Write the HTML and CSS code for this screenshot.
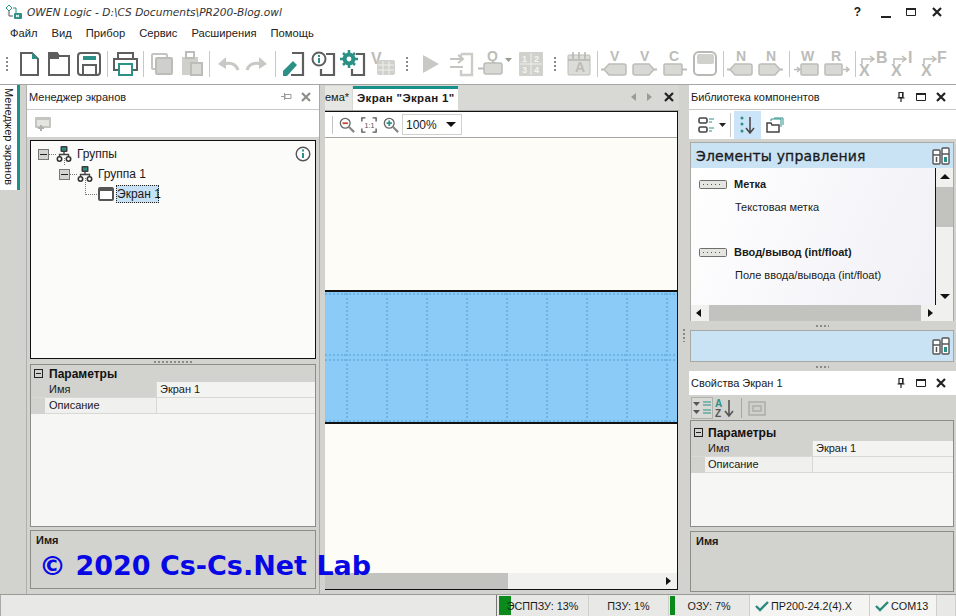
FILE: index.html
```html
<!DOCTYPE html>
<html lang="ru">
	<head>
		<meta charset="UTF-8" />
		<meta name="viewport" content="width=device-width, initial-scale=1.0" />
		<link rel="stylesheet" href="styles.css">
		<title>OWEN Logic</title>
	</head>
	<body>
		<svg class="sprite" width="0" height="0">
			<symbol id="i-new" viewBox="0 0 30 30"><path d="M7 4h11l6 6v16H7z" fill="#fff" stroke="#5e5e5e" stroke-width="2"/><path d="M18 4l6 6h-6z" fill="#2b9187"/></symbol>
			<symbol id="i-open" viewBox="0 0 30 30"><path d="M5 4h8l2 3h10v19H5z" fill="#fff" stroke="#5e5e5e" stroke-width="2"/><path d="M5 4h8l2 3v3H5z" fill="#5e5e5e"/></symbol>
			<symbol id="i-save" viewBox="0 0 30 30"><rect x="4" y="4" width="22" height="22" rx="3" fill="#fff" stroke="#5e5e5e" stroke-width="2"/><rect x="9" y="7" width="13" height="4" fill="#2b9187"/><path d="M9 26v-10h13v10" fill="none" stroke="#5e5e5e" stroke-width="2"/></symbol>
			<symbol id="i-print" viewBox="0 0 30 30"><path d="M8 9V4h15v5" fill="none" stroke="#5e5e5e" stroke-width="2"/><path d="M8 21H4V10h23v11h-4" fill="none" stroke="#5e5e5e" stroke-width="2"/><rect x="9" y="15" width="13" height="11" fill="#fff" stroke="#2b9187" stroke-width="2"/></symbol>
			<symbol id="i-copy" viewBox="0 0 30 30"><rect x="6" y="5" width="15" height="15" rx="1" fill="#fff" stroke="#c4c4c0" stroke-width="2"/><rect x="10" y="9" width="16" height="16" rx="1" fill="#cfcfcb" stroke="#bcbcb8" stroke-width="2"/></symbol>
			<symbol id="i-paste" viewBox="0 0 30 30"><path d="M6 8h16v10H15v8H6z" fill="#cfcfcb"/><rect x="10" y="3" width="8" height="6" fill="#fff" stroke="#bcbcb8" stroke-width="2"/><rect x="15" y="14" width="11" height="12" fill="#d8d8d4" stroke="#bcbcb8" stroke-width="2"/></symbol>
			<symbol id="i-undo" viewBox="0 0 30 30"><path d="M26 21c-2-6-8-8-15-6" fill="none" stroke="#c8c8c4" stroke-width="3"/><path d="M14 8L6 15l8 5z" fill="#c8c8c4"/></symbol>
			<symbol id="i-redo" viewBox="0 0 30 30"><path d="M5 21c2-6 8-8 15-6" fill="none" stroke="#c8c8c4" stroke-width="3"/><path d="M17 8l8 7-8 5z" fill="#c8c8c4"/></symbol>
			<symbol id="i-edit" viewBox="0 0 30 30"><path d="M14 4h11v22H13" fill="none" stroke="#5e5e5e" stroke-width="2.2"/><path d="M5 27v-5L15 12l4 4L9 27z" fill="#2b9187"/></symbol>
			<symbol id="i-info" viewBox="0 0 30 30"><path d="M18 5h8v21H13v-6" fill="none" stroke="#5e5e5e" stroke-width="2.2"/><circle cx="11" cy="10" r="6.500" fill="#fff" stroke="#5e5e5e" stroke-width="2"/><path d="M11 9v5M11 6v2" stroke="#2b9187" stroke-width="2"/></symbol>
			<symbol id="i-gear" viewBox="0 0 30 30"><path d="M18 5h8v21H14v-6" fill="none" stroke="#5e5e5e" stroke-width="2.2"/><circle cx="11" cy="10" r="4.500" fill="none" stroke="#2b9187" stroke-width="4"/><path d="M11 1v18M2 10h18M5 4l12 12M17 4L5 16" stroke="#2b9187" stroke-width="2.500"/><circle cx="11" cy="10" r="2.400" fill="#fff"/></symbol>
			<symbol id="i-play" viewBox="0 0 30 30"><path d="M7 6l16 9-16 9z" fill="#c8c8c4"/></symbol>
			<symbol id="i-in" viewBox="0 0 30 30"><path d="M15 5h11v21H15v-5M15 10V5" fill="none" stroke="#ccccc8" stroke-width="2.400"/><path d="M4 10h13M4 18h13M12 6l5 4-5 4" fill="none" stroke="#c4c4c0" stroke-width="2"/></symbol>
			<symbol id="i-blk-in" viewBox="0 0 30 30"><path d="M9 15h15a2 2 0 0 1 2 2v7a2 2 0 0 1-2 2H9l-5-5.500z" fill="#d8d8d4" stroke="#bcbcb8" stroke-width="1.500"/><path d="M1 20.500h3" stroke="#bcbcb8" stroke-width="2"/></symbol>
			<symbol id="i-blk-out" viewBox="0 0 30 30"><path d="M19 15H5a2 2 0 0 0-2 2v7a2 2 0 0 0 2 2h14l5-5.500z" fill="#d8d8d4" stroke="#bcbcb8" stroke-width="1.500"/><path d="M24 20.500h3" stroke="#bcbcb8" stroke-width="2"/></symbol>
			<symbol id="i-loop" viewBox="0 0 30 30"><rect x="7" y="5" width="17" height="10" rx="2" fill="#d0d0cc"/><path d="M9 3h12a5 5 0 0 1 5 5v14a4 4 0 0 1-4 4H8a4 4 0 0 1-4-4V8a5 5 0 0 1 5-5z" fill="none" stroke="#b8b8b4" stroke-width="2"/></symbol>
			<symbol id="i-close" viewBox="0 0 12 12"><path d="M2 2l8 8M10 2l-8 8" stroke="currentColor" stroke-width="2.200"/></symbol>
			<symbol id="i-max" viewBox="0 0 12 12"><path d="M1.500 2.500h9v7h-9z" fill="none" stroke="currentColor"/><path d="M1 2h10v2H1z" fill="currentColor"/></symbol>
			<symbol id="i-pin" viewBox="0 0 12 12"><path d="M4 1.500h4v5H4zM2.500 7h7M6 7v4" fill="none" stroke="currentColor" stroke-width="1.200"/><path d="M7 2h1v4H7z" fill="currentColor"/></symbol>
			<symbol id="i-pin-side" viewBox="0 0 12 12"><path d="M5 3.500h6v4H5zM4.500 2v7M1 5.500h3" fill="none" stroke="#9a9a96"/></symbol>
			<symbol id="i-org" viewBox="0 0 16 16"><rect x="4.500" y="0" width="7" height="6" rx="1" fill="#3d3d3d"/><rect x="6" y="1.500" width="4" height="3" fill="#2b9187"/><path d="M8 6v2.500M3.500 11V8.500h9V11" fill="none" stroke="#444" stroke-width="1.400"/><circle cx="3.500" cy="13" r="2.200" fill="#fff" stroke="#333" stroke-width="1.600"/><circle cx="12.500" cy="13" r="2.200" fill="#fff" stroke="#333" stroke-width="1.600"/></symbol>
			<symbol id="i-books" viewBox="0 0 18 18"><rect x="1" y="3" width="7" height="14" rx="1" fill="#fff" stroke="#555" stroke-width="1.400"/><rect x="10" y="1" width="7" height="16" rx="1" fill="#fff" stroke="#555" stroke-width="1.400"/><path d="M1 8h7M10 7h7" stroke="#555" stroke-width="1.400"/><path d="M4.500 10v5" stroke="#555" stroke-width="1.500"/><rect x="12" y="10" width="3" height="5" fill="#2b9187"/></symbol>
			<symbol id="i-block" viewBox="0 0 28 9"><rect x=".5" y=".5" width="27" height="8" rx="1" fill="#e4e4e0" stroke="#6e6e6a"/><path d="M4 4.500h20" stroke="#555" stroke-dasharray="1 3"/></symbol>
			<symbol id="i-check" viewBox="0 0 14 12"><path d="M1 6l4 4 8-8" fill="none" stroke="#2b8a7e" stroke-width="2.400"/></symbol>
		</svg>

		<div class="titlebar">
			<svg class="app-logo" width="18" height="16" viewBox="0 0 18 16"><path d="M3 1l3 3-3 3-3-3zM7 4h3v6" fill="none" stroke="#2b9187"/><path d="M3 7v5h4" fill="none" stroke="#555"/><rect x="8" y="9" width="8" height="6" rx="1" fill="#2b9187"/><path d="M10 11l3 2M13 11l-3 2" stroke="#fff"/></svg>
			<span class="app-title">OWEN Logic - D:\CS Documents\PR200-Blog.owl</span>
			<div class="win-buttons">
				<span class="win-help">?</span>
				<span class="win-min"></span>
				<svg class="win-ico"><use href="#i-max"/></svg>
				<svg class="win-ico"><use href="#i-close"/></svg>
			</div>
		</div>

		<nav class="menubar">
			<span>Файл</span><span>Вид</span><span>Прибор</span><span>Сервис</span><span>Расширения</span><span>Помощь</span>
		</nav>

		<div class="toolbar">
			<span class="grip grip-first"></span>
			<svg class="tool"><use href="#i-new"/></svg>
			<svg class="tool"><use href="#i-open"/></svg>
			<svg class="tool"><use href="#i-save"/></svg>
			<span class="sep"></span>
			<svg class="tool"><use href="#i-print"/></svg>
			<span class="sep"></span>
			<svg class="tool"><use href="#i-copy"/></svg>
			<svg class="tool"><use href="#i-paste"/></svg>
			<span class="sep"></span>
			<svg class="tool"><use href="#i-undo"/></svg>
			<svg class="tool"><use href="#i-redo"/></svg>
			<span class="sep"></span>
			<svg class="tool"><use href="#i-edit"/></svg>
			<svg class="tool"><use href="#i-info"/></svg>
			<svg class="tool"><use href="#i-gear"/></svg>
			<svg class="tool" viewBox="0 0 30 30"><text x="3" y="15" class="glyph glyph-big">V</text><rect x="9" y="11" width="18" height="15" rx="2" fill="#d0d0cc"/><path d="M10 16h16M10 21h16M15 12v14M21 12v14" stroke="#f0f0ec"/></svg>
			<span class="grip"></span>
			<svg class="tool"><use href="#i-play"/></svg>
			<svg class="tool"><use href="#i-in"/></svg>
			<svg class="tool tool-wide" viewBox="0 0 40 30"><text x="11" y="12" class="glyph">Q</text><rect x="8" y="14" width="18" height="11" rx="2" fill="#d8d8d4" stroke="#bcbcb8" stroke-width="1.500"/><path d="M2 19.500h6" stroke="#bcbcb8" stroke-width="2"/><path d="M29 9h7l-3.500 4z" fill="#9a9a96"/></svg>
			<svg class="tool" viewBox="0 0 30 30"><rect x="3" y="3" width="24" height="24" rx="1" fill="#d0d0cc"/><path d="M15 4v22M4 15h22" stroke="#f0f0ec"/><text x="6" y="13" class="glyph glyph-tiny">1</text><text x="18" y="13" class="glyph glyph-tiny">2</text><text x="6" y="24" class="glyph glyph-tiny">3</text><text x="18" y="24" class="glyph glyph-tiny">4</text></svg>
			<span class="grip"></span>
			<svg class="tool" viewBox="0 0 30 30"><rect x="4" y="6" width="22" height="20" rx="1" fill="#dcdcd8" stroke="#bcbcb8"/><path d="M9 3v7M15 3v7M21 3v7M4 11h22" stroke="#b4b4b0" stroke-width="1.500"/><text x="11" y="23" class="glyph">A</text></svg>
			<span class="sep"></span>
			<svg class="tool" viewBox="0 0 30 30"><use href="#i-blk-in" width="30" height="30"/><text x="10" y="12" class="glyph">V</text></svg>
			<svg class="tool" viewBox="0 0 30 30"><use href="#i-blk-out" width="30" height="30"/><text x="10" y="12" class="glyph">V</text></svg>
			<svg class="tool" viewBox="0 0 30 30"><rect x="4" y="15" width="18" height="11" rx="1" fill="#d8d8d4" stroke="#bcbcb8" stroke-width="1.500"/><path d="M22 20.500h5" stroke="#bcbcb8" stroke-width="2"/><text x="9" y="12" class="glyph">C</text></svg>
			<svg class="tool"><use href="#i-loop"/></svg>
			<span class="sep"></span>
			<svg class="tool" viewBox="0 0 30 30"><use href="#i-blk-in" width="30" height="30"/><text x="10" y="12" class="glyph">N</text></svg>
			<svg class="tool" viewBox="0 0 30 30"><use href="#i-blk-out" width="30" height="30"/><text x="10" y="12" class="glyph">N</text></svg>
			<span class="sep"></span>
			<svg class="tool" viewBox="0 0 30 30"><rect x="9" y="15" width="17" height="11" rx="1" fill="#d8d8d4" stroke="#bcbcb8" stroke-width="1.500"/><path d="M2 20.500h5M5 18l3 2.500-3 2.500" fill="none" stroke="#bcbcb8" stroke-width="1.500"/><text x="9" y="12" class="glyph">W</text></svg>
			<svg class="tool" viewBox="0 0 30 30"><rect x="3" y="15" width="17" height="11" rx="1" fill="#d8d8d4" stroke="#bcbcb8" stroke-width="1.500"/><path d="M21 20.500h6M24 18l3 2.500-3 2.500" fill="none" stroke="#bcbcb8" stroke-width="1.500"/><text x="9" y="12" class="glyph">R</text></svg>
			<span class="sep"></span>
			<svg class="tool" viewBox="0 0 30 30"><text x="1" y="27" class="glyph glyph-big">X</text><text x="18" y="14" class="glyph glyph-big">B</text><path d="M4 15v-5h11M12 7l4 3-4 3" fill="none" stroke="#bcbcb8" stroke-width="1.500"/></svg>
			<svg class="tool" viewBox="0 0 30 30"><text x="3" y="27" class="glyph glyph-big">X</text><text x="20" y="14" class="glyph glyph-big">I</text><path d="M6 15v-5h11M14 7l4 3-4 3" fill="none" stroke="#bcbcb8" stroke-width="1.500"/></svg>
			<svg class="tool" viewBox="0 0 30 30"><text x="3" y="27" class="glyph glyph-big">X</text><text x="19" y="14" class="glyph glyph-big">F</text><path d="M6 15v-5h11M14 7l4 3-4 3" fill="none" stroke="#bcbcb8" stroke-width="1.500"/></svg>
		</div>

		<div class="main">
			<div class="side-strip">
				<div class="side-tab">Менеджер экранов</div>
			</div>

			<section class="panel left-panel">
				<header class="panel-title">
					<span>Менеджер экранов</span>
					<svg class="title-ico"><use href="#i-pin-side"/></svg>
					<svg class="title-ico muted"><use href="#i-close"/></svg>
				</header>
				<div class="panel-tools">
					<svg class="add-ico" width="18" height="16" viewBox="0 0 18 16"><path d="M2 1h14a1 1 0 0 1 1 1v9a1 1 0 0 1-1 1H2a1 1 0 0 1-1-1V2a1 1 0 0 1 1-1z" fill="#c4c4c0"/><path d="M3 4h12v6H3z" fill="#e4e4e0"/><path d="M7 9v6M4 12h6" stroke="#b0b0ac" stroke-width="2"/></svg>
				</div>
				<div class="panel-body">
					<div class="tree">
						<svg class="tree-info" width="16" height="16" viewBox="0 0 16 16"><circle cx="8" cy="8" r="6.800" fill="#fff" stroke="#555" stroke-width="1.400"/><path d="M8 7v5M8 3.500v2" stroke="#2b9187" stroke-width="2"/></svg>
						<div class="tree-row">
							<span class="expander"></span><span class="dots-h"></span>
							<svg class="org-ico"><use href="#i-org"/></svg>
							<span class="tree-label">Группы</span>
						</div>
						<div class="tree-row indent-1">
							<span class="expander"></span><span class="dots-h"></span>
							<svg class="org-ico"><use href="#i-org"/></svg>
							<span class="tree-label">Группа 1</span>
						</div>
						<div class="tree-row indent-2">
							<span class="dots-corner"></span>
							<span class="screen-ico"></span>
							<span class="tree-selected">Экран 1</span>
						</div>
					</div>
					<div class="splitter"><span class="split-dots split-long"></span></div>
					<div class="props">
						<div class="prop-head"><span class="prop-minus"></span>Параметры</div>
						<div class="prop-row"><span class="prop-name">Имя</span><span class="prop-value">Экран 1</span></div>
						<div class="prop-row"><span class="prop-name prop-alt">Описание</span><span class="prop-value"></span></div>
					</div>
					<div class="descr"><b>Имя</b></div>
				</div>
			</section>

			<section class="center">
				<div class="tabs">
					<span class="tab">ема*</span>
					<span class="tab tab-active">Экран "Экран 1"</span>
					<div class="tab-nav">
						<i class="arrow-l"></i><i class="arrow-r"></i>
						<svg class="title-ico"><use href="#i-close"/></svg>
					</div>
				</div>
				<div class="doc">
					<div class="doc-tools">
						<span class="doc-sep"></span>
						<svg class="zoom-ico" viewBox="0 0 18 18"><circle cx="7" cy="7" r="5.500" fill="#fff" stroke="#666" stroke-width="1.500"/><path d="M4 7h6" stroke="#c8452c" stroke-width="2"/><path d="M11 11l6 6" stroke="#888" stroke-width="2.500"/></svg>
						<svg class="zoom-ico" viewBox="0 0 18 18"><path d="M1 5V1h4M13 1h4v4M17 13v4h-4M5 17H1v-4" fill="none" stroke="#555" stroke-width="1.500"/><text x="4" y="12" class="glyph-dark">1:1</text></svg>
						<svg class="zoom-ico" viewBox="0 0 18 18"><circle cx="7" cy="7" r="5.500" fill="#fff" stroke="#666" stroke-width="1.500"/><path d="M4 7h6M7 4v6" stroke="#2b9187" stroke-width="2"/><path d="M11 11l6 6" stroke="#888" stroke-width="2.500"/></svg>
						<div class="combo">100%<i class="arrow-d"></i></div>
					</div>
					<div class="canvas">
						<div class="screen">
							<div class="screen-row">
								<span></span><span></span><span></span><span></span><span></span><span></span><span></span><span></span><span></span><span></span>
							</div>
							<div class="screen-row">
								<span></span><span></span><span></span><span></span><span></span><span></span><span></span><span></span><span></span><span></span>
							</div>
						</div>
					</div>
					<div class="hscroll">
						<span class="hscroll-thumb"></span>
						<i class="arrow-r arrow-dark"></i>
					</div>
				</div>
			</section>

			<div class="v-splitter"><span class="split-dots-v"></span></div>

			<section class="panel right-panel">
				<header class="panel-title">
					<span>Библиотека компонентов</span>
					<svg class="title-ico"><use href="#i-pin"/></svg>
					<svg class="title-ico"><use href="#i-max"/></svg>
					<svg class="title-ico"><use href="#i-close"/></svg>
				</header>
				<div class="lib-tools">
					<svg class="lib-ico" width="30" height="18" viewBox="0 0 30 18"><rect x="1" y="2" width="8" height="5" rx="1.500" fill="none" stroke="#444" stroke-width="1.600"/><rect x="1" y="11" width="8" height="5" rx="1.500" fill="none" stroke="#444" stroke-width="1.600"/><path d="M11 3h5M11 6h3M11 12h5M11 15h3" stroke="#2b9187"/><path d="M21 7h7l-3.500 4z" fill="#222"/></svg>
					<span class="lib-sep"></span>
					<span class="lib-active"><svg width="18" height="18" viewBox="0 0 18 18"><circle cx="3" cy="2" r="1.500" fill="#2b9187"/><circle cx="3" cy="8" r="1.500" fill="#2b9187"/><circle cx="3" cy="15" r="1.500" fill="#2b9187"/><path d="M11 1v15M7 12l4 5 4-5" fill="none" stroke="#444" stroke-width="1.500"/></svg></span>
					<svg class="lib-ico" width="18" height="16" viewBox="0 0 18 16"><path d="M1 6h4l1 2h7v7H1z" fill="#fff" stroke="#444" stroke-width="1.500"/><path d="M5 4V2h10v8M8 1h9v7" fill="none" stroke="#2b9187"/></svg>
				</div>
				<div class="panel-body right-body">
					<div class="lib">
						<div class="lib-head"><span>Элементы управления</span><svg class="books"><use href="#i-books"/></svg></div>
						<div class="lib-view">
							<div class="lib-list">
								<div class="lib-item">
									<div class="lib-name"><svg class="block-ico"><use href="#i-block"/></svg><b>Метка</b></div>
									<div class="lib-desc">Текстовая метка</div>
								</div>
								<div class="lib-item">
									<div class="lib-name"><svg class="block-ico"><use href="#i-block"/></svg><b>Ввод/вывод (int/float)</b></div>
									<div class="lib-desc">Поле ввода/вывода (int/float)</div>
								</div>
							</div>
							<div class="vscroll">
								<i class="arrow-u"></i>
								<span class="vscroll-thumb"></span>
								<i class="arrow-d"></i>
							</div>
						</div>
						<div class="lib-hscroll">
							<i class="arrow-l arrow-dark"></i>
							<span class="lib-hthumb"></span>
							<i class="arrow-r arrow-dark"></i>
						</div>
					</div>
					<div class="splitter split-lib"><span class="split-dots"></span></div>
					<div class="lib-second"><svg class="books"><use href="#i-books"/></svg></div>
					<div class="splitter split-lib"><span class="split-dots"></span></div>
					<header class="panel-title prop-title">
						<span>Свойства Экран 1</span>
						<svg class="title-ico"><use href="#i-pin"/></svg>
						<svg class="title-ico"><use href="#i-max"/></svg>
						<svg class="title-ico"><use href="#i-close"/></svg>
					</header>
					<div class="prop-tools">
						<span class="prop-tool-on"><svg width="20" height="18" viewBox="0 0 20 18"><path d="M1 3h7l-3.500 4zM1 11h7l-3.500 4z" fill="#555"/><path d="M11 3h8M11 6h8M11 11h8M11 14h8" stroke="#2b9187"/></svg></span>
						<svg class="az-ico" width="20" height="20" viewBox="0 0 20 20"><text x="0" y="9" class="az-a">A</text><text x="0" y="19" class="az-z">Z</text><path d="M14 2v16M10 13l4 5 4-5" fill="none" stroke="#555" stroke-width="1.600"/></svg>
						<span class="prop-sep"></span>
						<svg class="prop-page" width="18" height="16" viewBox="0 0 18 16"><path d="M1 2h16v13H1z" fill="#cfcfcb" stroke="#adadaa" stroke-width="1.500"/><rect x="5" y="6" width="8" height="5" fill="none" stroke="#adadaa" stroke-width="1.500"/></svg>
					</div>
					<div class="props props-right">
						<div class="prop-head"><span class="prop-minus"></span>Параметры</div>
						<div class="prop-row"><span class="prop-name">Имя</span><span class="prop-value">Экран 1</span></div>
						<div class="prop-row"><span class="prop-name prop-alt">Описание</span><span class="prop-value"></span></div>
					</div>
					<div class="descr descr-right"><b>Имя</b></div>
				</div>
			</section>
		</div>

		<footer class="statusbar">
			<div class="st-cell st-empty"></div>
			<div class="st-cell st-eeprom"><i class="st-bar"></i><span class="st-text">ЭСППЗУ: 13%</span></div>
			<div class="st-cell st-rom">ПЗУ: 1%</div>
			<div class="st-cell st-ram"><i class="st-bar"></i>ОЗУ: 7%</div>
			<div class="st-cell st-device"><svg class="st-check"><use href="#i-check"/></svg>ПР200-24.2(4).X</div>
			<div class="st-cell st-com"><svg class="st-check"><use href="#i-check"/></svg>COM13</div>
			<div class="st-cell st-grip"></div>
		</footer>

		<div class="watermark">© 2020 Cs-Cs.Net Lab</div>
	</body>
</html>
```

FILE: styles.css
```css
* {
	box-sizing: border-box;
}

body {
	margin: 0;
	width: 956px;
	height: 616px;
	overflow: hidden;
	position: relative;
	background-color: #fff;
	color: #1a1a1a;
	font-family: "Liberation Sans", sans-serif;
	font-size: 12px;
}

.sprite {
	position: absolute;
}

.glyph {
	font: bold 14px "Liberation Sans", sans-serif;
	fill: #bcbcb8;
}

.glyph-big {
	font-size: 16px;
}

.glyph-tiny {
	font-size: 9px;
	fill: #f4f4f0;
}

.glyph-dark {
	font: 8px "Liberation Sans", sans-serif;
	fill: #555;
}

/* title + menu */
.titlebar {
	height: 24px;
	display: flex;
	align-items: center;
	padding-left: 6px;
}

.app-logo {
	margin-right: 3px;
}

.app-title {
	font-family: "DejaVu Sans", sans-serif;
	font-style: italic;
	font-size: 10.6px;
	color: #333;
}

.win-buttons {
	margin-left: auto;
	display: flex;
	align-items: center;
	padding-right: 13px;
}

.win-help {
	font: bold 12px "Liberation Sans", sans-serif;
	margin-right: 20px;
}

.win-min {
	width: 10px;
	height: 2px;
	background-color: #222;
	margin-top: 9px;
	margin-right: 14px;
}

.win-ico {
	width: 12px;
	height: 12px;
	color: #222;
}

.win-ico + .win-ico {
	margin-left: 14px;
}

.menubar {
	height: 18px;
	display: flex;
	align-items: center;
	padding-left: 10px;
	gap: 14px;
	color: #222;
	font-size: 11.2px;
}

.toolbar {
	margin-top: 2px;
	height: 40px;
	display: flex;
	align-items: center;
}

.tool {
	width: 30px;
	height: 30px;
	flex: none;
}

.tool-wide {
	width: 40px;
}

.sep {
	width: 6px;
	height: 26px;
	flex: none;
	background: linear-gradient(#c8c8c4, #c8c8c4) center / 1px 100% no-repeat;
}

.grip {
	width: 18px;
	height: 16px;
	flex: none;
	background: radial-gradient(circle, #8a8a86 1px, transparent 1px) center top / 2px 4px repeat-y;
}

.grip-first {
	width: 14px;
}

/* main area */
.main {
	height: 510px;
	display: flex;
	background-color: #d2d2ce;
	border-top: 1px solid #a6a6a2;
}

.side-strip {
	width: 26px;
	flex: none;
}

.side-tab {
	width: 20px;
	height: 105px;
	background-color: #fff;
	border-right: 3px solid #1c8f8a;
	writing-mode: vertical-rl;
	padding-top: 3px;
	padding-right: 1px;
	line-height: 15px;
	white-space: nowrap;
	font-size: 11px;
}

.panel-title {
	height: 25px;
	background-color: #fff;
	display: flex;
	align-items: center;
	gap: 8px;
	padding: 0 9px 0 2px;
	border-bottom: 1px solid #c8c8c4;
	font-size: 11px;
}

.panel-title span {
	margin-right: auto;
}

.title-ico {
	width: 12px;
	height: 12px;
	color: #222;
	flex: none;
}

.title-ico.muted {
	color: #8e8e8a;
}

.left-panel {
	width: 294px;
	flex: none;
	display: flex;
	flex-direction: column;
	border-right: 1px solid #a8a8a4;
	border-left: 1px solid #b0b0ac;
}

.left-panel .panel-title {
	padding-right: 7px;
}

.panel-tools {
	height: 27px;
	background-color: #fff;
	display: flex;
	align-items: center;
	padding-left: 7px;
}

.panel-body {
	padding: 3px 3px 0;
}

.tree {
	height: 219px;
	border: 1px solid #111;
	background-color: #fbfbfa;
	padding-top: 3px;
	position: relative;
}

.tree-info {
	position: absolute;
	right: 4px;
	top: 5px;
}

.tree-row {
	height: 20px;
	display: flex;
	align-items: center;
	padding-left: 7px;
	position: relative;
}

.indent-1 {
	padding-left: 28px;
}

.indent-2 {
	padding-left: 46px;
}

.expander {
	width: 11px;
	height: 11px;
	border: 1px solid #777;
	background: linear-gradient(#222, #222) center / 7px 1px no-repeat #d4d4d0;
	flex: none;
}

.dots-h {
	width: 7px;
	border-top: 1px dotted #777;
	flex: none;
}

.org-ico {
	width: 16px;
	height: 16px;
	margin-right: 5px;
	flex: none;
}

.indent-1::before,
.indent-2::before {
	content: "";
	position: absolute;
	border-left: 1px dotted #777;
}

.indent-1::before {
	left: 33px;
	top: -6px;
	height: 7px;
}

.indent-2::before {
	left: 54px;
	top: -6px;
	height: 15px;
}

.dots-corner {
	width: 14px;
	margin-left: 8px;
	margin-right: -1px;
	border-top: 1px dotted #777;
	flex: none;
}

.screen-ico {
	width: 16px;
	height: 14px;
	border: 2px solid #555;
	border-top-width: 4px;
	border-radius: 2px;
	background-color: #fff;
	margin-right: 2px;
	flex: none;
}

.tree-selected {
	padding: 2px 1px;
	background-color: #c7e2f6;
	outline: 1px dotted #222;
	outline-offset: -1px;
	height: 18px;
	line-height: 14px;
	width: 43px;
	white-space: nowrap;
}

.splitter {
	height: 5px;
	display: flex;
	justify-content: center;
	align-items: center;
}

.split-dots {
	width: 14px;
	height: 2px;
	background: radial-gradient(circle, #8a8a86 1px, transparent 1px) left / 4px 2px repeat-x;
}

.split-long {
	width: 40px;
}

.props {
	height: 163px;
	border: 1px solid #8c8c88;
	background-color: #f6f6f4;
	font-size: 11px;
}

.prop-head {
	height: 17px;
	background-color: #d2d2ce;
	display: flex;
	align-items: center;
	font-weight: bold;
	font-size: 12px;
	gap: 6px;
	padding-left: 3px;
	color: #111;
}

.prop-minus {
	width: 9px;
	height: 9px;
	border: 1px solid #222;
	background: linear-gradient(#222, #222) center / 5px 1px no-repeat;
}

.prop-row {
	height: 16px;
	display: flex;
	background-color: #d2d2ce;
	line-height: 15px;
}

.prop-name {
	width: 125px;
	padding-left: 18px;
	flex: none;
	border-bottom: 1px solid #d8d8d4;
}

.prop-alt {
	margin-left: 14px;
	width: 111px;
	padding-left: 4px;
	background-color: #f0f0ee;
}

.prop-value {
	flex: 1;
	padding-left: 3px;
	background-color: #f3f3f1;
	border-left: 1px solid #d8d8d4;
	border-bottom: 1px solid #d8d8d4;
}

.descr {
	margin-top: 3px;
	height: 59px;
	border: 1px solid #8c8c88;
	padding: 3px 5px;
	font-size: 11px;
}

/* center */
.center {
	width: 354px;
	flex: none;
	margin-left: 5px;
	display: flex;
	flex-direction: column;
}

.tabs {
	height: 26px;
	display: flex;
	align-items: flex-end;
	gap: 1px;
	background-color: #d8d8d4;
	border-bottom: 1px solid #a6a6a2;
	position: relative;
}

.tab {
	width: 27px;
	height: 24px;
	line-height: 22px;
	overflow: hidden;
	background-color: #e6e6e2;
	font-size: 11px;
}

.tab-active {
	width: 105px;
	background-color: #fff;
	border-top: 3px solid #17908b;
	font-weight: bold;
	font-size: 11.5px;
	letter-spacing: .35px;
	line-height: 19px;
	padding-left: 4px;
	white-space: nowrap;
}

.tab-nav {
	position: absolute;
	right: 4px;
	top: 6px;
	display: flex;
	align-items: center;
	gap: 11px;
}

.arrow-l,
.arrow-r,
.arrow-u,
.arrow-d {
	display: block;
	width: 0;
	height: 0;
	flex: none;
	border-style: solid;
	border-color: transparent;
}

.arrow-l {
	border-width: 4px 5px 4px 0;
	border-right-color: #9a9a96;
}

.arrow-r {
	border-width: 4px 0 4px 5px;
	border-left-color: #9a9a96;
}

.arrow-dark.arrow-l {
	border-right-color: #111;
}

.arrow-dark.arrow-r {
	border-left-color: #111;
}

.arrow-u {
	border-width: 0 5px 5px;
	border-bottom-color: #111;
}

.arrow-d {
	border-width: 5px 5px 0;
	border-top-color: #111;
}

.doc {
	height: 479px;
	border-top: 1px solid #111;
	border-right: 1px solid #111;
	border-bottom: 1px solid #111;
	display: flex;
	flex-direction: column;
	width: 353px;
	background-color: #fdfcf6;
}

.doc-tools {
	height: 26px;
	background-color: #fff;
	border-bottom: 1px solid #a6a6a2;
	display: flex;
	align-items: center;
	gap: 6px;
	padding-left: 7px;
	flex: none;
}

.doc-sep {
	width: 1px;
	height: 18px;
	background-color: #c4c4c0;
}

.zoom-ico {
	width: 16px;
	height: 16px;
	flex: none;
}

.combo {
	width: 60px;
	height: 21px;
	margin-left: -3px;
	border: 1px solid #d0d0cc;
	display: flex;
	align-items: center;
	justify-content: space-between;
	padding: 0 5px 0 3px;
}

.canvas {
	height: 435px;
	padding-top: 152px;
	flex: none;
}

.screen {
	height: 134px;
	border-top: 2px solid #111;
	border-bottom: 2px solid #111;
	background-color: #8bcbf8;
	padding-top: 1px;
	overflow: hidden;
	display: flex;
	flex-direction: column;
	gap: 3px;
}

.screen-row {
	height: 63px;
	display: flex;
	margin-left: -19px;
}

.screen-row span {
	width: 40px;
	flex: none;
	border-left: 2px dotted #6fb4e6;
	border-top: 2px dotted #6fb4e6;
	border-bottom: 2px dotted #6fb4e6;
}

.hscroll {
	height: 16px;
	background-color: #f0f0ee;
	display: flex;
	align-items: center;
	flex: none;
}

.hscroll-thumb {
	width: 183px;
	height: 16px;
	background-color: #c2c2be;
}

.hscroll .arrow-r {
	margin-left: auto;
	margin-right: 6px;
	border-left-color: #111;
}

.v-splitter {
	width: 10px;
	flex: none;
	display: flex;
	align-items: center;
	justify-content: center;
}

.split-dots-v {
	width: 2px;
	height: 14px;
	margin-top: -10px;
	background: radial-gradient(circle, #8a8a86 1px, transparent 1px) top / 2px 4px repeat-y;
}

/* right side */
.right-panel {
	width: 267px;
	flex: none;
	display: flex;
	flex-direction: column;
}

.lib-tools {
	height: 29px;
	background-color: #fff;
	display: flex;
	align-items: center;
	padding-left: 9px;
}

.lib-ico {
	flex: none;
}

.lib-sep {
	width: 1px;
	height: 24px;
	background-color: #c8c8c4;
	margin: 0 3px 0 2px;
}

.lib-active {
	width: 27px;
	height: 28px;
	background-color: #cce4f7;
	display: flex;
	align-items: center;
	justify-content: center;
	margin-right: 5px;
}

.right-body {
	padding: 3px 2px 0 1px;
	background-color: #d2d2ce;
}

.lib {
	border: 1px solid #a8a8a4;
	height: 179px;
	display: flex;
	flex-direction: column;
	background-color: #f4f4f6;
}

.lib-head {
	height: 25px;
	background-color: #c9e3f5;
	display: flex;
	align-items: center;
	justify-content: space-between;
	padding: 0 3px 0 5px;
	font-family: "DejaVu Sans", sans-serif;
	font-size: 14px;
	letter-spacing: .15px;
	-webkit-text-stroke: .3px #1a1a1a;
	flex: none;
}

.books {
	width: 18px;
	height: 18px;
}

.lib-view {
	height: 137px;
	display: flex;
	flex: none;
}

.lib-list {
	flex: 1;
	background: linear-gradient(115deg, #ffffff, #f0f0f6);
	padding: 9px 0 0 8px;
	font-size: 11px;
}

.lib-item {
	height: 68px;
}

.lib-name {
	display: flex;
	align-items: center;
	gap: 7px;
	height: 14px;
}

.block-ico {
	width: 28px;
	height: 9px;
}

.lib-desc {
	margin: 10px 0 0 36px;
}

.vscroll {
	width: 18px;
	flex: none;
	border-left: 1px solid #111;
	background-color: #f0f0ee;
	display: flex;
	flex-direction: column;
	align-items: center;
	padding: 6px 0;
	position: relative;
}

.vscroll-thumb {
	width: 100%;
	height: 40px;
	margin-top: 8px;
	background-color: #c2c2be;
}

.vscroll .arrow-d {
	margin-top: auto;
}

.lib-hscroll {
	height: 16px;
	background-color: #f0f0ee;
	display: flex;
	align-items: center;
	flex: none;
	padding: 0 5px;
}

.lib-hthumb {
	width: 212px;
	height: 16px;
	margin: 0 7px 0 8px;
	background-color: #c2c2be;
}

.split-lib {
	height: 9px;
}

.lib-second {
	height: 32px;
	background-color: #c9e3f5;
	border: 1px solid #a8a8a4;
	display: flex;
	align-items: center;
	justify-content: flex-end;
	padding-right: 3px;
}

.prop-title {
	margin: 0 -2px 0 -1px;
	height: 24px;
	border-bottom: none;
	padding-right: 9px;
}

.prop-tools {
	height: 26px;
	display: flex;
	align-items: center;
	gap: 2px;
	padding-left: 1px;
	border-bottom: 1px solid #8c8c88;
}

.prop-tool-on {
	width: 22px;
	height: 22px;
	background-color: #d8d8d4;
	border: 1px solid #b0b0ac;
	display: flex;
	align-items: center;
	justify-content: center;
}

.az-a,
.az-z {
	font: bold 10px "Liberation Sans", sans-serif;
	fill: #2b9187;
}

.az-z {
	fill: #555;
}

.prop-sep {
	width: 1px;
	height: 20px;
	background-color: #a8a8a4;
	margin: 0 4px;
}

.props-right {
	height: 106px;
	border-top: none;
}

.props-right .prop-head {
	height: 20px;
	padding-top: 3px;
	gap: 5px;
}

.props-right .prop-name {
	width: 121px;
	padding-left: 17px;
}

.props-right .prop-alt {
	width: 107px;
	padding-left: 3px;
}

.descr-right {
	margin-top: 4px;
	height: 61px;
}

/* status */
.statusbar {
	height: 22px;
	display: flex;
	background-color: #e8e8e6;
	border-top: 1px solid #9a9a96;
	font-size: 10.8px;
}

.st-cell {
	height: 100%;
	display: flex;
	align-items: center;
	justify-content: center;
	border-right: 1px solid #cfcfcb;
	position: relative;
	flex: none;
	white-space: nowrap;
}

.st-empty {
	width: 497px;
	border-right: 1px solid #777;
	border-left: 1px solid #aaa;
}

.st-eeprom {
	width: 92px;
}

.st-text {
	position: relative;
}

.st-rom {
	width: 80px;
}

.st-ram {
	width: 81px;
}

.st-device {
	width: 120px;
	background-color: #f4f4f2;
	justify-content: flex-start;
	padding-left: 5px;
}

.st-com {
	width: 67px;
	background-color: #f4f4f2;
	justify-content: flex-start;
	padding-left: 5px;
}

.st-grip {
	flex: 1;
}

.st-bar {
	position: absolute;
	left: 2px;
	top: 1px;
	bottom: 1px;
	background-color: #0b8a1c;
}

.st-eeprom .st-bar {
	width: 12px;
}

.st-ram .st-bar {
	left: 1px;
	width: 5px;
}

.st-check {
	width: 14px;
	height: 12px;
	margin-right: 2px;
	flex: none;
}

.watermark {
	position: absolute;
	left: 39px;
	top: 550px;
	font: bold 27px "DejaVu Sans", sans-serif;
	color: #0808e4;
	white-space: nowrap;
}
```
